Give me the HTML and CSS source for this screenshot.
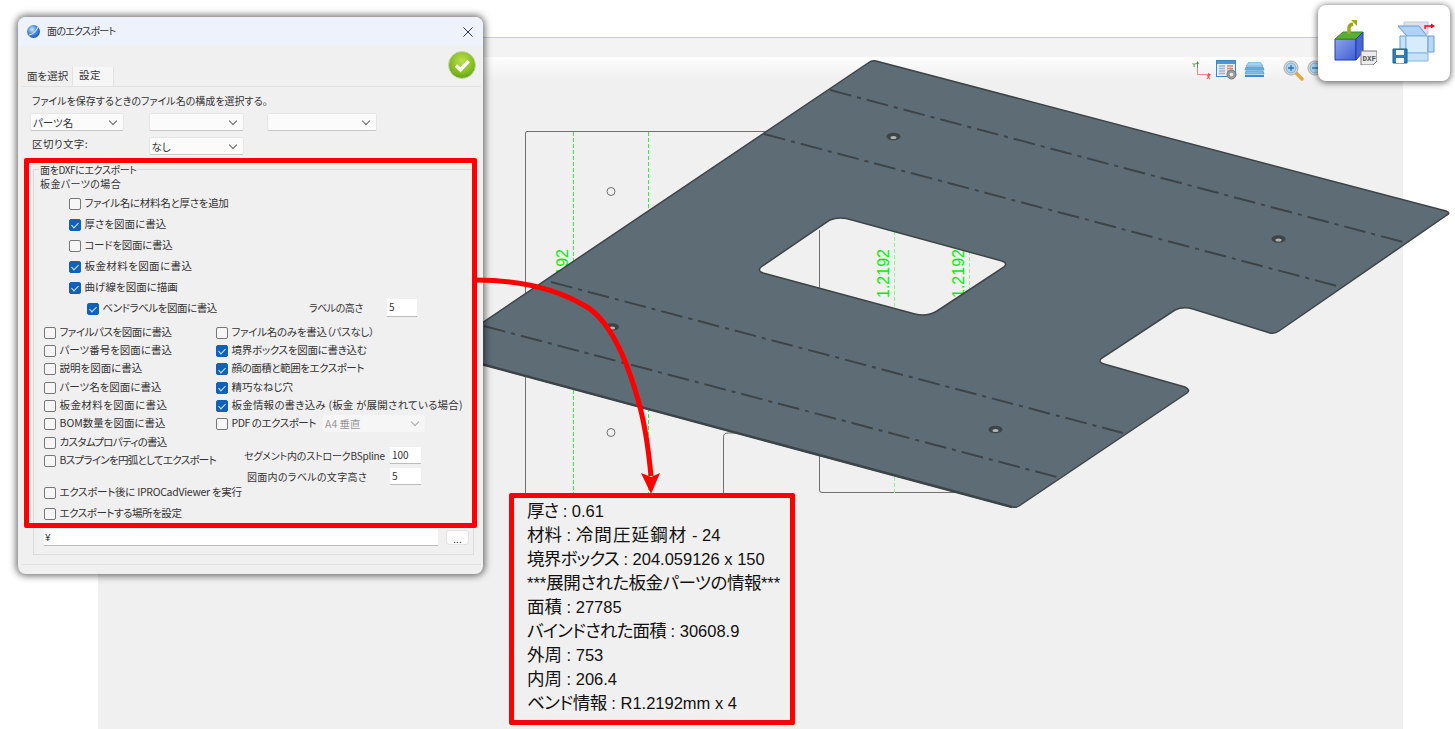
FILE: index.html
```html
<!DOCTYPE html>
<html lang="ja">
<head>
    <meta charset="utf-8">
    <title>面のエクスポート</title>
    <link rel="stylesheet" href="styles.css">
</head>
<body>

    <!-- CAD viewer behind everything -->
    <div class="viewer">
        <div class="viewer-strip"></div>
        <div class="viewer-toolbar">
            <svg class="tool" width="20" height="20" viewBox="0 0 20 20">
                <path d="M5.500 2V14.500H17" fill="none" stroke="#e86a6a" stroke-width="0.800"/>
                <path d="M5.500 2V8" stroke="#3a9a3a" stroke-width="0.800" fill="none"/>
                <path d="M4 4L5.500 1L7 4Z" fill="#3a9a3a"/>
                <path d="M16 13L19 14.500L16 16Z" fill="#e05050"/>
                <text x="0" y="7" class="axis axis-y">Y</text>
                <text x="14.500" y="19" class="axis axis-x">X</text>
            </svg>
            <svg class="tool tool-table" width="21" height="20" viewBox="0 0 21 20">
                <rect x="0.500" y="0.500" width="19" height="16" fill="#e4ecf5" stroke="#3f86c4"/>
                <rect x="1" y="1" width="18" height="3" fill="#4c96d2"/>
                <path d="M3 6H9M3 8.500H9M3 11H9M3 13.500H9" stroke="#9fb4c8" stroke-width="1.500"/>
                <path d="M11 6H17M11 8.500H17M11 11H14" stroke="#d08a7a" stroke-width="1.500"/>
                <circle cx="15.500" cy="14.500" r="4.500" fill="#9a9a9a" stroke="#777"/>
                <circle cx="15.500" cy="14.500" r="1.800" fill="#eee"/>
            </svg>
            <svg class="tool tool-layers" width="21" height="16" viewBox="0 0 21 16">
                <path d="M5 0H16L19 4H2Z" fill="#a5d4f2" stroke="#5ba4d8" stroke-width="0.700"/>
                <path d="M2 5H19L20 8H1Z" fill="#63b0e4" stroke="#4f9ad0" stroke-width="0.700"/>
                <path d="M2 9H19L20 12H1Z" fill="#7cc0ea" stroke="#4f9ad0" stroke-width="0.700"/>
                <path d="M1 13H20V15H1Z" fill="#3d8cc8"/>
            </svg>
            <svg class="tool tool-zoom" width="21" height="21" viewBox="0 0 21 21">
                <path d="M13 13L19 19" stroke="#e5a740" stroke-width="3.500" stroke-linecap="round"/>
                <circle cx="8" cy="8" r="7" fill="#dcdcdc" stroke="#a8a8a8"/>
                <circle cx="8" cy="8" r="5" fill="#a9d6f4" stroke="#6a9cc0" stroke-width="0.700"/>
                <path d="M5 8H11M8 5V11" stroke="#2c6ea8" stroke-width="1.300"/>
            </svg>
            <svg class="tool tool-zoom-out" width="21" height="21" viewBox="0 0 21 21">
                <circle cx="8" cy="8" r="7" fill="#dcdcdc" stroke="#a8a8a8"/>
                <circle cx="8" cy="8" r="5" fill="#a9d6f4" stroke="#6a9cc0" stroke-width="0.700"/>
                <path d="M5 8H11" stroke="#2c6ea8" stroke-width="1.300"/>
            </svg>
        </div>
    </div>

    <!-- flat pattern and folded part -->
    <svg class="drawing" width="1455" height="729" viewBox="0 0 1455 729">
        <g fill="none" stroke="#6f6f6f">
            <path d="M525.500 493V133Q525.500 131.500 527 131.500H770"/>
            <path d="M723.500 493V437Q723.500 433 728 433H745"/>
            <path d="M819.500 230V490Q819.500 492.500 822 492.500H960"/>
        </g>
        <g fill="none" stroke="#33f533" stroke-dasharray="4 2">
            <path d="M573.500 132V493"/>
            <path d="M648.500 132V493"/>
        </g>
        <g fill="none" stroke="#8df58d" stroke-dasharray="4 2">
            <path d="M894.500 225V493"/>
            <path d="M969.500 245V493"/>
        </g>
        <circle cx="611" cy="191.500" r="4" fill="none" stroke="#6f6f6f"/>
        <circle cx="611" cy="432.500" r="4" fill="none" stroke="#6f6f6f"/>
        <text class="dim" transform="translate(567.500 298) rotate(-90)">1.2192</text>
        <text class="dim" transform="translate(889 298) rotate(-90)">1.2192</text>
        <text class="dim" transform="translate(964 298) rotate(-90)">1.2192</text>

        <path class="plate" fill-rule="evenodd" d="M470 331L868 63Q872 60 876 61L1446 211Q1451 213 1447 215L1279 331Q1275 334 1270 333L1193 309Q1183 306 1175 310L1102 358Q1097 362 1104 364L1185 387Q1191 390 1187 393L1019 506Q1016 508 1012 507L470 361Z
            M830 220Q840 216 852 220L1002 261Q1008 263 1004 267L937 311Q927 317 915 314L763 273Q757 271 761 267Z"/>
        <path class="plate-edge" d="M470 361L1012 507"/>

        <g class="bend">
            <path d="M830 90L1403 242"/>
            <path d="M764 134L1337 286"/>
            <path d="M551 282L1123 433"/>
            <path d="M484 326L1057 477"/>
        </g>
        <g class="bolt">
            <ellipse cx="893.500" cy="136.500" rx="7" ry="3.800"/>
            <ellipse cx="1278.500" cy="239" rx="7" ry="3.800"/>
            <ellipse cx="612" cy="327" rx="7" ry="3.800"/>
            <ellipse cx="995.500" cy="429.500" rx="7" ry="3.800"/>
        </g>
        <g class="bolt-hole">
            <ellipse cx="893.500" cy="137.500" rx="3" ry="1.500"/>
            <ellipse cx="1278.500" cy="240" rx="3" ry="1.500"/>
            <ellipse cx="612" cy="328" rx="3" ry="1.500"/>
            <ellipse cx="995.500" cy="430.500" rx="3" ry="1.500"/>
        </g>
    </svg>

    <!-- export dialog -->
    <div class="dialog">
        <div class="titlebar">
            <svg class="title-icon" width="15" height="15" viewBox="0 0 15 15">
                <defs>
                    <radialGradient id="ball" cx="0.400" cy="0.350" r="0.700">
                        <stop offset="0" stop-color="#cfe6ff"/>
                        <stop offset="0.500" stop-color="#4b8fe6"/>
                        <stop offset="1" stop-color="#1d4fa8"/>
                    </radialGradient>
                </defs>
                <circle cx="7.500" cy="7.500" r="6.500" fill="url(#ball)"/>
                <path d="M3 11Q9 10 12 3" fill="none" stroke="#e8f2ff" stroke-width="1"/>
            </svg>
            <span class="title-text">面のエクスポート</span>
            <svg class="close" width="10" height="10" viewBox="0 0 10 10">
                <path d="M0.500 0.500L9.500 9.500M9.500 0.500L0.500 9.500" stroke="#333" stroke-width="1"/>
            </svg>
        </div>

        <div class="tabstrip">
            <div class="tabs">
                <div class="tab">面を選択</div>
                <div class="tab tab-active">設定</div>
            </div>
            <svg class="ok" width="28" height="28" viewBox="0 0 28 28">
                <defs>
                    <radialGradient id="okfill" cx="0.500" cy="0.350" r="0.700">
                        <stop offset="0" stop-color="#bfe04a"/>
                        <stop offset="0.700" stop-color="#7db81e"/>
                        <stop offset="1" stop-color="#5c9a10"/>
                    </radialGradient>
                </defs>
                <circle cx="14" cy="14" r="13.500" fill="url(#okfill)" stroke="#c9d6b0"/>
                <path d="M8 14.500L12.500 19L20.500 10" fill="none" stroke="#fff" stroke-width="3.500"/>
            </svg>
        </div>

        <div class="panel">
            <div class="caption">ファイルを保存するときのファイル名の構成を選択する。</div>
            <div class="combo-row">
                <div class="combo combo-a">パーツ名</div>
                <div class="combo combo-b"></div>
                <div class="combo combo-c"></div>
            </div>
            <div class="combo-row combo-row-sep">
                <div class="sep-label">区切り文字:</div>
                <div class="combo combo-b">なし</div>
            </div>

            <div class="group">
                <span class="legend">面をDXFにエクスポート</span>
                <div class="group-head">板金パーツの場合</div>

                <div class="sheet-options">
                    <label class="opt fit-s"><input type="checkbox"><span>ファイル名に材料名と厚さを追加</span></label>
                    <label class="opt"><input type="checkbox" checked><span>厚さを図面に書込</span></label>
                    <label class="opt fit-s"><input type="checkbox"><span>コードを図面に書込</span></label>
                    <label class="opt fit-p"><input type="checkbox" checked><span>板金材料を図面に書込</span></label>
                    <label class="opt"><input type="checkbox" checked><span>曲げ線を図面に描画</span></label>
                    <div class="bend-row">
                        <label class="opt fit-m"><input type="checkbox" checked><span>ベンドラベルを図面に書込</span></label>
                        <span class="bend-label">ラベルの高さ</span>
                        <div class="field field-bend">5</div>
                    </div>
                </div>

                <div class="columns">
                    <div class="col">
                        <label class="opt fit-m"><input type="checkbox"><span>ファイルパスを図面に書込</span></label>
                        <label class="opt"><input type="checkbox"><span>パーツ番号を図面に書込</span></label>
                        <label class="opt"><input type="checkbox"><span>説明を図面に書込</span></label>
                        <label class="opt"><input type="checkbox"><span>パーツ名を図面に書込</span></label>
                        <label class="opt fit-p"><input type="checkbox"><span>板金材料を図面に書込</span></label>
                        <label class="opt"><input type="checkbox"><span>BOM数量を図面に書込</span></label>
                        <label class="opt fit-n"><input type="checkbox"><span>カスタムプロパティの書込</span></label>
                        <label class="opt fit-n"><input type="checkbox"><span>Bスプラインを円弧としてエクスポート</span></label>
                    </div>
                    <div class="col">
                        <label class="opt fit-s"><input type="checkbox"><span>ファイル名のみを書込（パスなし）</span></label>
                        <label class="opt fit-s"><input type="checkbox" checked><span>境界ボックスを図面に書き込む</span></label>
                        <label class="opt fit-m"><input type="checkbox" checked><span>顔の面積と範囲をエクスポート</span></label>
                        <label class="opt"><input type="checkbox" checked><span>精巧なねじ穴</span></label>
                        <label class="opt fit-q"><input type="checkbox" checked><span>板金情報の書き込み (板金 が展開されている場合)</span></label>
                        <div class="pdf-row">
                            <label class="opt fit-m"><input type="checkbox"><span>PDF のエクスポート</span></label>
                            <div class="combo combo-pdf">A4 垂直</div>
                        </div>
                        <div class="size-row">
                            <span class="size-tight">セグメント内のストロークBSpline</span>
                            <div class="field">100</div>
                        </div>
                        <div class="size-row size-row-2">
                            <span class="size-wide">図面内のラベルの文字高さ</span>
                            <div class="field">5</div>
                        </div>
                    </div>
                </div>

                <label class="opt opt-wide fit-s"><input type="checkbox"><span>エクスポート後に IPROCadViewer を実行</span></label>
                <label class="opt opt-wide opt-place fit-m"><input type="checkbox"><span>エクスポートする場所を設定</span></label>

                <div class="path-row">
                    <div class="path-input">¥</div>
                    <div class="browse">...</div>
                </div>
            </div>
        </div>
    </div>

    <div class="highlight"></div>

    <!-- part info shown on the drawing -->
    <div class="callout">
        <div><span class="ja ja-short">厚さ</span> : 0.61</div>
        <div><span class="ja">材料</span> : <span class="ja ja-wide">冷間圧延鋼材</span> - 24</div>
        <div><span class="ja ja-tight">境界ボックス</span> : 204.059126 x 150</div>
        <div>***<span class="ja ja-mid">展開された板金パーツの情報</span>***</div>
        <div><span class="ja">面積</span> : 27785</div>
        <div><span class="ja ja-tight">バインドされた面積</span> : 30608.9</div>
        <div><span class="ja">外周</span> : 753</div>
        <div><span class="ja">内周</span> : 206.4</div>
        <div><span class="ja ja-mid">ベンド情報</span> : R1.2192mm x 4</div>
    </div>

    <svg class="arrow" width="1455" height="729" viewBox="0 0 1455 729">
        <path d="M476 280C520 280 556 288 587 307C612 323 628 362 640 407C646 430 649 455 651 476" fill="none" stroke="#f00" stroke-width="5"/>
        <path d="M641 473L651 477L660 473L651 494Z" fill="#f00"/>
    </svg>

    <!-- floating icons top right -->
    <div class="icon-card">
        <svg width="43" height="45" viewBox="0 0 43 45">
            <defs>
                <linearGradient id="cubeface" x1="0" y1="0" x2="1" y2="1">
                    <stop offset="0" stop-color="#8ea4ec"/>
                    <stop offset="1" stop-color="#3f5fd2"/>
                </linearGradient>
            </defs>
            <path d="M1 19H22V40H1Z" fill="url(#cubeface)" stroke="#1c3fa8"/>
            <path d="M1 19L9 12H29L22 19Z" fill="#58b030" stroke="#3c8a20"/>
            <path d="M22 19L29 12V32L22 40Z" fill="#4a66d6" stroke="#1c3fa8"/>
            <path d="M15 14V8Q15 5 19 4" fill="none" stroke="#9aaa18" stroke-width="3.500"/>
            <path d="M17 0H23V6Z" fill="#9aaa18"/>
            <path d="M27 31H43V41L39 45H27Z" fill="#ececec" stroke="#777"/>
            <text x="28.500" y="41" class="dxf">DXF</text>
        </svg>
        <svg class="box-icon" width="43" height="45" viewBox="0 0 43 45">
            <path d="M12 2H36V14H12Z" fill="#dde0ea" stroke="#c5c9d8"/>
            <path d="M6 6H27L35 16H15Z" fill="#aed4f5" stroke="#6c9bd2"/>
            <path d="M8 16H14V32H8Z" fill="#c5e2fa" stroke="#6c9bd2"/>
            <path d="M14 16H36V33H14Z" fill="#d6ecfd" stroke="#8ab4de"/>
            <path d="M36 16H42V32H36Z" fill="#b5d9f6" stroke="#6c9bd2"/>
            <path d="M14 33H36V41H14Z" fill="#c5e2fa" stroke="#8ab4de"/>
            <path d="M1 29H15V43H1Z" fill="#2b82b8" stroke="#165c8c"/>
            <path d="M4 30H12V35H4Z" fill="#e8f4fb"/>
            <path d="M4 38H12V43H4Z" fill="#fff"/>
            <path d="M33 9V6H40" fill="none" stroke="#f00" stroke-width="1.300"/>
            <path d="M39 3.500L43 6L39 8.500Z" fill="#f00"/>
        </svg>
    </div>

</body>
</html>
```

FILE: styles.css
```css
* {
    box-sizing: border-box;
}

html, body {
    margin: 0;
    height: 729px;
    overflow: hidden;
}

body {
    position: relative;
    background: #fff;
    font-family: "Liberation Sans", "Noto Sans CJK JP", sans-serif;
}

/* viewer */
.viewer {
    margin: 37px 0 0 98px;
    width: 1305px;
    height: 692px;
    background: #f0f0f0;
    border-top: 1px solid #c9ccd8;
}
.viewer-strip {
    height: 19px;
    background: #f3f3f3;
}
.viewer-toolbar {
    height: 23px;
    background: linear-gradient(#fdfdfd, #f0f0f0);
    display: flex;
    align-items: flex-start;
    padding: 3px 0 0 1094px;
}
.tool-table {
    margin-left: 4px;
}
.tool-layers {
    margin: 2px 0 0 7px;
}
.tool-zoom {
    margin-left: 18px;
}
.tool-zoom-out {
    margin-left: 3px;
}
.axis {
    font-size: 6px;
    font-weight: bold;
}
.axis-y {
    fill: #3a9a3a;
}
.axis-x {
    fill: #d04040;
}

/* drawing */
.drawing {
    position: absolute;
    left: 0;
    top: 0;
}
.dim {
    font-size: 16px;
    fill: #00f000;
}
.plate {
    fill: #5e6d75;
    stroke: #3d4447;
    stroke-width: 1.5;
}
.plate-edge {
    fill: none;
    stroke: #3d4447;
    stroke-width: 2.5;
}
.bend {
    fill: none;
    stroke: #3d4447;
    stroke-width: 2;
    stroke-dasharray: 22 6 4 6;
}
.bolt {
    fill: #3d4447;
}
.bolt-hole {
    fill: #b0b4b4;
}

/* dialog */
.dialog {
    position: absolute;
    left: 18px;
    top: 17px;
    width: 465px;
    height: 557px;
    background: #f0f0f0;
    border-radius: 8px;
    box-shadow: 0 0 7px 2px rgba(0, 0, 0, 0.55);
    font-family: "Noto Sans CJK JP", "Liberation Sans", sans-serif;
    font-feature-settings: "palt";
    font-size: 10px;
    color: #333;
    overflow: hidden;
}
.titlebar {
    height: 29px;
    background: #eef2fb;
    display: flex;
    align-items: center;
    padding: 0 10px 0 8px;
}
.title-text {
    margin: -2px 0 0 6px;
    letter-spacing: -0.7px;
}
.close {
    margin-left: auto;
}
.tabstrip {
    height: 40px;
    display: flex;
    padding: 0 7px 0 5px;
}
.tabs {
    display: flex;
    align-self: flex-end;
}
.tab {
    width: 50px;
    height: 18px;
    line-height: 18px;
    padding-left: 4px;
    border-right: 1px solid #e2e2e2;
    font-size: 10.500px;
}
.tab-active {
    width: 41px;
    height: 19px;
    line-height: 16px;
    padding-left: 6px;
    background: #f6f6f6;
    letter-spacing: 0.5px;
}
.ok {
    margin: 5px 0 0 auto;
}
.panel {
    margin: 0 2px 0 4px;
    height: 479px;
    border-top: 1px solid #e2e2e2;
    border-bottom: 1px solid #e0e0e0;
    padding: 6px 0 0 8px;
}
.caption {
    height: 16px;
    line-height: 16px;
    padding-left: 2px;
}
.combo-row {
    display: flex;
    align-items: center;
    margin-top: 4px;
}
.combo-row-sep {
    margin-top: 6px;
}
.sep-label {
    width: 118.500px;
    margin-top: -5px;
    padding-left: 2px;
    font-size: 10.500px;
    letter-spacing: 0.4px;
}
.combo {
    position: relative;
    height: 18px;
    line-height: 17px;
    padding-left: 2px;
    background: #fbfbfb;
    border: 1px solid #e6e6e6;
    border-bottom-color: #c8c8c8;
    border-radius: 2px;
    font-size: 10.500px;
}
.combo::after {
    content: "";
    position: absolute;
    right: 7px;
    top: 4px;
    width: 5px;
    height: 5px;
    border-right: 1px solid #666;
    border-bottom: 1px solid #666;
    transform: rotate(45deg);
}
.combo-a {
    width: 94px;
}
.combo-b {
    width: 95px;
}
.combo-a + .combo-b {
    margin-left: 24.500px;
}
.combo-c {
    width: 110px;
    margin-left: 23.500px;
}
.group {
    position: relative;
    margin: 14px 0 0 3px;
    width: 441px;
    height: 386px;
    border: 1px solid #dcdcdc;
}
.legend {
    position: absolute;
    left: 5px;
    top: -7px;
    padding: 0 1px;
    line-height: 14px;
    background: #f0f0f0;
    letter-spacing: -0.4px;
}
.group-head {
    margin: 7px 0 0 6px;
    height: 14px;
    line-height: 14px;
    letter-spacing: 0.4px;
}
.sheet-options {
    margin: 1.500px 0 0 35px;
    display: grid;
    grid-auto-rows: 21px;
}
.opt {
    display: flex;
    align-items: center;
    height: 100%;
    white-space: nowrap;
    font-size: 10.500px;
}
.opt span {
    margin-top: -2px;
}
.fit-n {
    letter-spacing: -0.7px;
}
.fit-m {
    letter-spacing: -0.45px;
}
.fit-s {
    letter-spacing: -0.28px;
}
.fit-p {
    letter-spacing: 0.4px;
}
.fit-q {
    letter-spacing: 0.2px;
}
.opt input {
    appearance: none;
    position: relative;
    flex: none;
    width: 12px;
    height: 12px;
    margin: 1px 3.500px 0 0;
    background: #f6f6f6;
    border: 1px solid #777;
    border-radius: 2px;
}
.opt input:checked {
    background: #0f62b8;
    border-color: #0f62b8;
}
.opt input:checked::after {
    content: "";
    position: absolute;
    left: 3px;
    top: 1.500px;
    width: 3px;
    height: 6px;
    border-right: 1px solid #cfe4fa;
    border-bottom: 1px solid #cfe4fa;
    transform: rotate(45deg);
}
.bend-row {
    display: flex;
    align-items: center;
    padding-left: 18px;
}
.bend-row .opt {
    width: 222px;
}
.bend-label {
    width: 78px;
    margin-top: -2px;
    letter-spacing: -0.5px;
}
.field {
    width: 31px;
    height: 17px;
    line-height: 16px;
    padding-left: 2px;
    background: #fff;
    border-bottom: 1px solid #bcbcbc;
}
.field-bend {
    width: 30px;
    height: 18px;
}
.columns {
    margin: 4.500px 0 0 10px;
    display: grid;
    grid-template-columns: 172px 1fr;
    height: 162px;
}
.col {
    display: flex;
    flex-direction: column;
}
.col .opt {
    height: 18.330px;
    flex: none;
}
.pdf-row {
    display: flex;
    align-items: center;
    height: 18.330px;
}
.pdf-row .opt {
    width: 107px;
}
.combo-pdf {
    width: 102px;
    height: 17px;
    border: none;
    background: #f6f6f6;
    color: #999;
}
.combo-pdf::after {
    border-color: #aaa;
}
.size-row {
    display: flex;
    justify-content: space-between;
    align-items: center;
    margin: 14px 0 0 28px;
    width: 177px;
}
.size-row-2 {
    margin-top: 4px;
    padding-left: 3px;
}
.size-tight {
    letter-spacing: -0.2px;
}
.size-wide {
    letter-spacing: 0.3px;
}
.opt-wide {
    height: 14px;
    margin-left: 10px;
}
.opt-place {
    margin-top: 7px;
}
.path-row {
    display: flex;
    align-items: flex-start;
    margin: 9px 0 0 10px;
}
.path-input {
    width: 394px;
    height: 17px;
    line-height: 16px;
    padding-left: 1px;
    background: #fff;
    border-bottom: 1px solid #bcbcbc;
}
.browse {
    width: 23px;
    height: 15px;
    margin: 1px 0 0 8px;
    line-height: 15px;
    text-align: center;
    background: #fbfbfb;
    border: 1px solid #e2e2e2;
    border-radius: 3px;
}

/* red annotations */
.highlight {
    position: absolute;
    left: 24px;
    top: 158px;
    width: 453px;
    height: 370px;
    border: 5px solid #f00;
    border-radius: 2px;
}
.callout {
    position: absolute;
    left: 509px;
    top: 493px;
    width: 286px;
    height: 232px;
    padding: 1px 0 0 13px;
    background: #f0f0f0;
    border: 5px solid #f00;
    border-radius: 2px;
    font-size: 16.500px;
    line-height: 24px;
    color: #111;
    white-space: nowrap;
}
.callout .ja {
    font-size: 17.500px;
    font-feature-settings: "palt";
}
.callout .ja-short {
    letter-spacing: -1px;
}
.callout .ja-wide {
    letter-spacing: 1.1px;
}
.callout .ja-tight {
    letter-spacing: -0.8px;
}
.callout .ja-mid {
    letter-spacing: -0.5px;
}
.arrow {
    position: absolute;
    left: 0;
    top: 0;
}

/* icon card */
.icon-card {
    position: absolute;
    left: 1318px;
    top: 5px;
    width: 132px;
    height: 76px;
    display: flex;
    align-items: flex-start;
    padding: 15px 0 0 16px;
    background: #fff;
    border-radius: 8px;
    box-shadow: 0 1px 6px 1px rgba(0, 0, 0, 0.55);
}
.box-icon {
    margin-left: 15px;
}
.dxf {
    font-family: "Liberation Mono", monospace;
    font-size: 7.500px;
    font-weight: bold;
    fill: #555;
}
```
